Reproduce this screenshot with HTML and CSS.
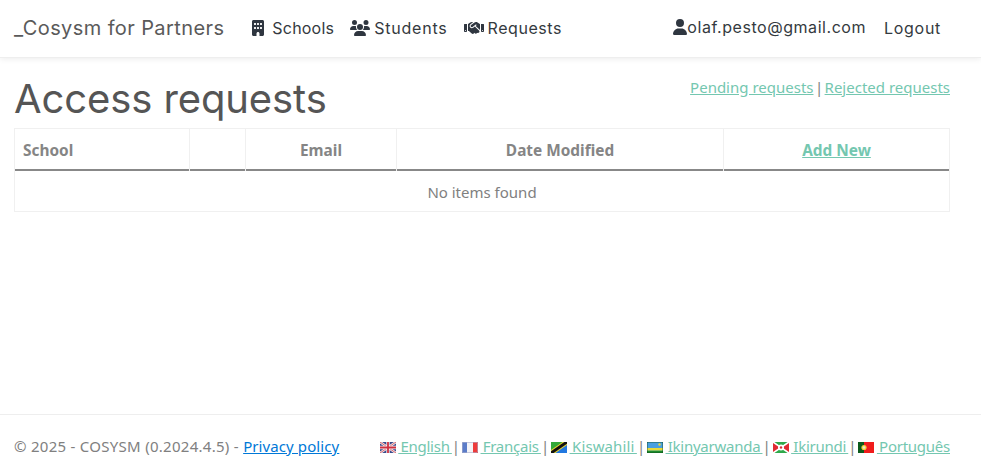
FILE: index.html
```html
<!DOCTYPE html>
<html lang="en">
<head>
<meta charset="utf-8">
<title>Access requests</title>
<link rel="stylesheet" href="styles.css">
</head>
<body>
<header class="navbar">
  <a class="brand" href="#">_Cosysm for Partners</a>
  <nav class="nav-main">
    <a class="tight" href="#"><svg class="ic ic-building" viewBox="0 0 384 512"><path d="M48 0C21.5 0 0 21.5 0 48V464c0 26.5 21.5 48 48 48h96V432c0-26.5 21.5-48 48-48s48 21.5 48 48v80h96c26.5 0 48-21.5 48-48V48c0-26.5-21.5-48-48-48H48zM64 240c0-8.8 7.2-16 16-16h32c8.8 0 16 7.2 16 16v32c0 8.8-7.2 16-16 16H80c-8.8 0-16-7.2-16-16V240zm112-16h32c8.8 0 16 7.2 16 16v32c0 8.8-7.2 16-16 16H176c-8.8 0-16-7.2-16-16V240c0-8.8 7.2-16 16-16zm80 16c0-8.8 7.2-16 16-16h32c8.8 0 16 7.2 16 16v32c0 8.8-7.2 16-16 16H272c-8.8 0-16-7.2-16-16V240zM80 96h32c8.8 0 16 7.2 16 16v32c0 8.8-7.2 16-16 16H80c-8.8 0-16-7.2-16-16V112c0-8.8 7.2-16 16-16zm80 16c0-8.8 7.2-16 16-16h32c8.8 0 16 7.2 16 16v32c0 8.8-7.2 16-16 16H176c-8.8 0-16-7.2-16-16V112zM272 96h32c8.8 0 16 7.2 16 16v32c0 8.8-7.2 16-16 16H272c-8.8 0-16-7.2-16-16V112c0-8.8 7.2-16 16-16z"/></svg>Schools</a>
    <a class="wider" href="#"><svg class="ic ic-wide" viewBox="0 0 640 512"><path d="M144 0a80 80 0 1 1 0 160A80 80 0 1 1 144 0zM512 0a80 80 0 1 1 0 160A80 80 0 1 1 512 0zM0 298.7C0 239.8 47.8 192 106.7 192h42.7c15.9 0 31 3.5 44.6 9.7c-1.3 7.2-1.9 14.7-1.9 22.3c0 38.2 16.8 72.5 43.3 96c-.2 0-.4 0-.7 0H21.3C9.6 320 0 310.4 0 298.7zM405.3 320c-.2 0-.4 0-.7 0c26.6-23.5 43.3-57.8 43.3-96c0-7.6-.7-15-1.9-22.3c13.6-6.3 28.7-9.7 44.6-9.7h42.7C592.2 192 640 239.8 640 298.7c0 11.8-9.6 21.3-21.3 21.3H405.3zM224 224a96 96 0 1 1 192 0 96 96 0 1 1 -192 0zM128 485.3C128 411.7 187.7 352 261.3 352H378.7C452.3 352 512 411.7 512 485.3c0 14.7-11.9 26.7-26.7 26.7H154.7c-14.7 0-26.7-11.9-26.7-26.7z"/></svg>Students</a>
    <a href="#"><svg class="ic ic-wide" viewBox="0 0 640 512"><path d="M323.4 85.2l-96.8 78.4c-16.1 13-19.2 36.4-7 53.1c12.9 17.8 38 21.3 55.3 7.8l99.3-77.2c7-5.4 17-4.2 22.5 2.8s4.2 17-2.8 22.5l-20.9 16.2L512 316.8V128h-.7l-3.9-2.5L434.8 79c-15.3-9.8-33.2-15-51.4-15c-21.8 0-43 7.5-60 21.2zm22.8 124.4l-51.7 40.2C263 274.4 217.3 268 193.7 235.6c-22.2-30.5-16.6-73.1 12.7-96.8l83.2-67.3c-11.6-4.9-24.1-7.4-36.8-7.4C234 64 215.7 69.6 200 80l-72 48V352h28.2l91.4 83.4c19.6 17.9 49.9 16.5 67.8-3.1c5.5-6.1 9.2-13.2 11.1-20.6l17 15.6c19.5 17.9 49.9 16.6 67.8-2.9c4.5-4.9 7.8-10.6 9.9-16.5c19.4 13 45.8 10.3 62.1-7.5c17.9-19.5 16.6-49.9-2.9-67.8l-134.2-123zM16 128c-8.8 0-16 7.2-16 16V352c0 17.7 14.3 32 32 32H64c17.7 0 32-14.3 32-32V128H16zM48 320a16 16 0 1 1 0 32 16 16 0 1 1 0-32zM544 128V352c0 17.7 14.3 32 32 32h32c17.7 0 32-14.3 32-32V144c0-8.8-7.2-16-16-16H544zm32 208a16 16 0 1 1 32 0 16 16 0 1 1 -32 0z"/></svg>Requests</a>
  </nav>
  <div class="nav-user">
    <a class="user" href="#"><svg class="ic ic-user" viewBox="0 0 448 512"><path d="M224 256A128 128 0 1 0 224 0a128 128 0 1 0 0 256zm-45.7 48C79.8 304 0 383.8 0 482.3C0 498.7 13.3 512 29.7 512H418.3c16.4 0 29.7-13.3 29.7-29.7C448 383.8 368.2 304 269.7 304H178.3z"/></svg>olaf.pesto@gmail.com</a>
    <a class="logout" href="#">Logout</a>
  </div>
</header>

<main class="content">
  <div class="title-row">
    <h1>Access requests</h1>
    <p class="filters"><a href="#">Pending requests</a> | <a href="#">Rejected requests</a></p>
  </div>
  <table class="grid">
    <colgroup>
      <col class="c1"><col class="c2"><col class="c3"><col class="c4"><col class="c5">
    </colgroup>
    <thead>
      <tr>
        <th class="left">School</th>
        <th></th>
        <th>Email</th>
        <th>Date Modified</th>
        <th class="last"><a href="#">Add New</a></th>
      </tr>
    </thead>
    <tbody>
      <tr><td colspan="5">No items found</td></tr>
    </tbody>
  </table>
</main>

<footer class="footer">
  <p class="copy">© 2025 - COSYSM (0.2024.4.5) - <a href="#">Privacy policy</a></p>
  <p class="langs">
    <a href="#"><svg class="flag" viewBox="0 0 16 11"><rect width="16" height="11" fill="#3a4a8c"/><path d="M0 0L16 11M16 0L0 11" stroke="#f1e8ea" stroke-width="2.4"/><path d="M0 0L16 11M16 0L0 11" stroke="#d0454f" stroke-width=".8"/><path d="M8 0V11M0 5.5H16" stroke="#f4eef0" stroke-width="3.4"/><path d="M8 0V11M0 5.5H16" stroke="#cf3040" stroke-width="1.8"/></svg> English </a>|
    <a href="#"><svg class="flag" viewBox="0 0 16 11"><rect width="6" height="11" fill="#5b7cc8"/><rect x="5" width="6" height="11" fill="#f3f3f6"/><rect x="11" width="5" height="11" fill="#ee3b3b"/><rect x=".5" y=".5" width="15" height="10" fill="none" stroke="#a8aecb" stroke-width=".6"/></svg> Français </a>|
    <a class="kis" href="#"><svg class="flag" viewBox="0 0 16 11"><rect width="16" height="11" fill="#2278e0"/><path d="M0 11V0H16Z" fill="#32a838"/><path d="M0 11L16 0" stroke="#e8d430" stroke-width="5"/><path d="M0 11L16 0" stroke="#111" stroke-width="3"/></svg> Kiswahili </a>|
    <a href="#"><svg class="flag" viewBox="0 0 16 11"><rect width="16" height="6" fill="#4a9fe0"/><rect y="6" width="16" height="2.5" fill="#e9d93a"/><rect y="8.5" width="16" height="2.5" fill="#1c8a2c"/><circle cx="12.5" cy="2.5" r="1.2" fill="#eed838"/><rect width="16" height="11" fill="none" stroke="#0d4a1a" stroke-width=".8"/></svg> Ikinyarwanda </a>|
    <a href="#"><svg class="flag" viewBox="0 0 16 11"><rect width="16" height="11" fill="#2fa84a"/><path d="M0 0L8 5.5L0 11ZM16 0L8 5.5L16 11Z" fill="#e02a32"/><path d="M0 0L16 11M16 0L0 11" stroke="#fff" stroke-width="1.6"/><circle cx="8" cy="5.5" r="3" fill="#fff"/><circle cx="8" cy="5.5" r="1.2" fill="#d6343a"/></svg> Ikirundi </a>|
    <a href="#"><svg class="flag" viewBox="0 0 16 11"><rect width="16" height="11" fill="#f01c1c"/><rect width="6" height="11" fill="#0c5a1c"/><circle cx="6" cy="5.5" r="2.6" fill="#f2d23a"/><circle cx="6" cy="5.5" r="1.3" fill="#e8e4d8"/></svg> Português</a>
  </p>
</footer>
</body>
</html>
```
FILE: styles.css
```css
* { box-sizing: border-box; }
html, body { height: 100%; }
body {
  margin: 0;
  display: flex;
  flex-direction: column;
  font-family: "Noto Sans", "Open Sans", sans-serif;
  font-size: 15px;
  color: #808080;
  background: #fff;
}
.navbar {
  height: 58px;
  flex: none;
  display: flex;
  align-items: center;
  padding: 0 40px 1px 14px;
  font-family: Inter, "Noto Sans", sans-serif;
  letter-spacing: .55px;
  box-shadow: 0 1px 6px rgba(0,0,0,.08);
  border-bottom: 1px solid #eee;
}
.navbar a { text-decoration: none; color: #343a40; }
.navbar .brand { font-size: 20px; color: #5a5a5a; margin-right: 28px; letter-spacing: .4px; }
.nav-main { display: flex; gap: 16px; }
.nav-main a, .nav-user a { display: flex; align-items: center; font-size: 16px; }
.nav-main .tight { letter-spacing: .2px; }
.nav-main .wider { letter-spacing: .8px; }
.nav-user { margin-left: auto; display: flex; align-items: center; gap: 18px; }
.nav-user .user { padding-bottom: 2px; }
.nav-user .logout { letter-spacing: .7px; }
.ic { fill: #2f3640; height: 16px; flex: none; }
.ic-building { width: 12px; margin-right: 8px; }
.ic-wide { width: 20px; margin-right: 4px; }
.ic-user { width: 14px; }
.content { flex: 1; padding: 0 31px 0 14px; }
.title-row { display: flex; justify-content: space-between; align-items: flex-start; height: 70px; }
h1 { margin: 17px 0 0; font-family: Inter, "Noto Sans", sans-serif; font-weight: 400; font-size: 40px; line-height: 48px; color: #555; letter-spacing: -.1px; }
.filters { margin: 18px 0 0; line-height: 22px; white-space: nowrap; word-spacing: -2.5px; }
.filters a { word-spacing: 0; }
a { color: #74c7b0; }
.grid { width: 100%; border: 1px solid #f0f0f0; border-collapse: separate; border-spacing: 0; table-layout: fixed; }
.c1 { width: 175px; } .c2 { width: 56px; } .c3 { width: 151px; } .c4 { width: 327px; }
.grid th, .grid td { text-align: center; }
.grid th {
  height: 42px;
  border-right: 1px solid #f0f0f0;
  background: linear-gradient(#888, #888) left bottom / 100% 2px no-repeat;
  color: #858585;
  font-weight: 700;
  font-size: 15.4px;
  padding: 0 8px;
}
.grid th.left { text-align: left; }
.grid th.last { border-right: 0; }
.grid td { height: 40px; padding: 2px 0 0; }
.footer {
  flex: none;
  height: 57px;
  border-top: 1px solid #eee;
  display: flex;
  justify-content: space-between;
  align-items: flex-start;
  padding: 19px 31px 0 14px;
  line-height: 24px;
  white-space: nowrap;
}
.footer p { margin: 0; }
.copy { letter-spacing: .28px; }
.copy a { color: #0078d7; letter-spacing: .1px; }
.langs { letter-spacing: -.25px; word-spacing: -1.5px; }
.langs .kis { letter-spacing: .1px; }
.flag { width: 16px; height: 11px; vertical-align: -1px; margin-right: 2.5px; }
```
